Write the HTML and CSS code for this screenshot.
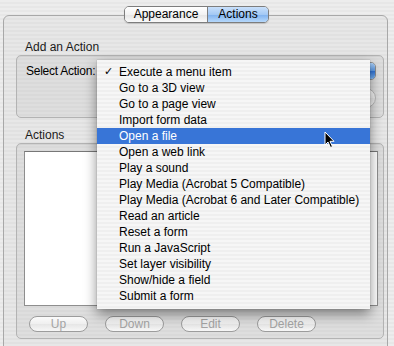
FILE: index.html
```html
<!DOCTYPE html>
<html lang="en">
<head>
  <meta charset="UTF-8">
  <title>Actions</title>
  <link rel="stylesheet" href="styles.css">
</head>
<body>
  <div class="window">
    <!-- Segmented tab control -->
    <div class="tabs">
      <div class="tab">Appearance</div>
      <div class="tab tab-active">Actions</div>
    </div>

    <div class="pane">
      <div class="group-label">Add an Action</div>
      <div class="group group-add">
        <div class="select-row">
          <div class="select-label">Select Action:</div>
          <div class="popup">
            <span class="popup-value"></span>
            <span class="popup-arrows"></span>
          </div>
        </div>
        <div class="add-row">
          <button class="btn btn-add" disabled>Add...</button>
        </div>
      </div>

      <div class="group-label group-label-list">Actions</div>
      <div class="group group-list">
        <div class="list"></div>
        <div class="list-buttons">
          <button class="btn" disabled>Up</button>
          <button class="btn" disabled>Down</button>
          <button class="btn" disabled>Edit</button>
          <button class="btn" disabled>Delete</button>
        </div>
      </div>
    </div>

    <!-- Open popup menu -->
    <ul class="menu">
      <li class="checked">Execute a menu item</li>
      <li>Go to a 3D view</li>
      <li>Go to a page view</li>
      <li>Import form data</li>
      <li class="selected">Open a file</li>
      <li>Open a web link</li>
      <li>Play a sound</li>
      <li>Play Media (Acrobat 5 Compatible)</li>
      <li>Play Media (Acrobat 6 and Later Compatible)</li>
      <li>Read an article</li>
      <li>Reset a form</li>
      <li>Run a JavaScript</li>
      <li>Set layer visibility</li>
      <li>Show/hide a field</li>
      <li>Submit a form</li>
    </ul>

    <svg class="cursor" width="12" height="18" viewBox="0 0 12 18">
      <path d="M1 1 L1 14 L4 11 L6.5 16.5 L8.5 15.6 L6 10.3 L10 10.3 Z" fill="#000" stroke="#fff" stroke-width="1"/>
    </svg>
  </div>
</body>
</html>
```

FILE: styles.css
```css
/* Aqua-style panel */
html, body {
  margin: 0;
  padding: 0;
}

body {
  font-family: "Liberation Sans", Arial, sans-serif;
  font-size: 12px;
  color: #000;
  background: repeating-linear-gradient(#ededed 0, #ededed 2px, #e7e7e7 2px, #e7e7e7 4px);
}

.window {
  position: relative;
  width: 394px;
  height: 346px;
  padding-top: 6px;
  box-sizing: border-box;
  overflow: hidden;
}

.tabs {
  position: relative;
  z-index: 2;
  display: flex;
  width: 145px;
  height: 17px;
  margin-left: 124px;
  border: 1px solid #7d7d7d;
  border-radius: 5px;
  box-sizing: border-box;
  overflow: hidden;
  box-shadow: 0 1px 1px rgba(0, 0, 0, 0.15);
}

.tab {
  line-height: 15px;
  text-align: center;
  background: linear-gradient(#ffffff, #f2f2f2 50%, #e4e4e4 51%, #fafafa);
}

.tab:first-child {
  width: 82px;
  border-right: 1px solid #7d7d7d;
}

.tab-active {
  flex: 1;
  background: linear-gradient(#c9e0fb, #a4c9f4 50%, #7fb1ee 51%, #b6d8fb);
}

.pane {
  height: 360px;
  margin: -8px 6px 0 3px;
  padding-top: 23px;
  border: 1px solid #a8a8a8;
  border-radius: 6px;
  background: rgba(0, 0, 0, 0.025);
  box-sizing: border-box;
}

.group-label {
  margin-left: 21px;
  line-height: 16px;
  color: #1a1a1a;
}

.group-label-list {
  margin-top: 10px;
  line-height: 15px;
}

.group {
  margin: 0 3px 0 12px;
  border: 1px solid #b3b3b3;
  border-radius: 5px;
  background: rgba(0, 0, 0, 0.035);
  box-shadow: inset 0 1px 1px rgba(0, 0, 0, 0.06);
}

.group-add {
  padding: 6px 7px 9px 9px;
}

.select-row {
  display: flex;
  align-items: center;
  height: 18px;
}

.select-label {
  flex: 0 0 71px;
  white-space: nowrap;
  letter-spacing: -0.25px;
}

.popup {
  flex: 1;
  display: flex;
  height: 18px;
  border: 1px solid #8c8c8c;
  border-radius: 5px;
  background: linear-gradient(#ffffff, #f0f0f0 50%, #e3e3e3 51%, #fbfbfb);
  box-sizing: border-box;
  overflow: hidden;
}

.popup-value {
  flex: 1;
}

.popup-arrows {
  width: 15px;
  background: linear-gradient(#a8cdf6, #5d9be6 50%, #2f72d6 51%, #7db8f6);
  border-left: 1px solid #5580b8;
}

.add-row {
  display: flex;
  justify-content: flex-end;
  margin-top: 8px;
}

.btn {
  width: 59px;
  height: 16px;
  padding: 0;
  font-family: inherit;
  font-size: 12px;
  line-height: 14px;
  color: #a4a4a4;
  border: 1px solid #9c9c9c;
  border-radius: 8px;
  background: linear-gradient(#fbfbfb, #efefef 50%, #e6e6e6 51%, #f7f7f7);
}

.btn-add {
  width: 54px;
  height: 20px;
  border-radius: 10px;
  color: #c8c8c8;
  border-color: #b8b8b8;
}

.group-list {
  height: 196px;
  padding: 7px 5px 6px 7px;
  box-sizing: border-box;
}

.list {
  height: 155px;
  background: #fff;
  border: 1px solid #8e8e8e;
  border-top-color: #777;
  box-sizing: border-box;
}

.list-buttons {
  display: flex;
  gap: 17px;
  margin: 10px 0 0 5px;
}

/* Dropdown menu */
.menu {
  position: absolute;
  left: 97px;
  top: 60px;
  width: 273px;
  height: 249px;
  margin: 0;
  padding: 4px 0;
  list-style: none;
  box-sizing: border-box;
  background: repeating-linear-gradient(#f6f6f6 0, #f6f6f6 2px, #efefef 2px, #efefef 4px);
  box-shadow: 0 5px 12px rgba(0, 0, 0, 0.45), 0 0 1px rgba(0, 0, 0, 0.3);
  z-index: 5;
}

.menu li {
  position: relative;
  height: 16px;
  line-height: 16px;
  padding-left: 22px;
  white-space: nowrap;
}

.menu li.checked::before {
  content: "\2713";
  position: absolute;
  left: 7px;
  font-family: "DejaVu Sans", sans-serif;
  font-size: 11px;
}

.menu li.selected {
  background: #3875d7;
  color: #fff;
}

.cursor {
  position: absolute;
  left: 324px;
  top: 131px;
  z-index: 6;
}
```
